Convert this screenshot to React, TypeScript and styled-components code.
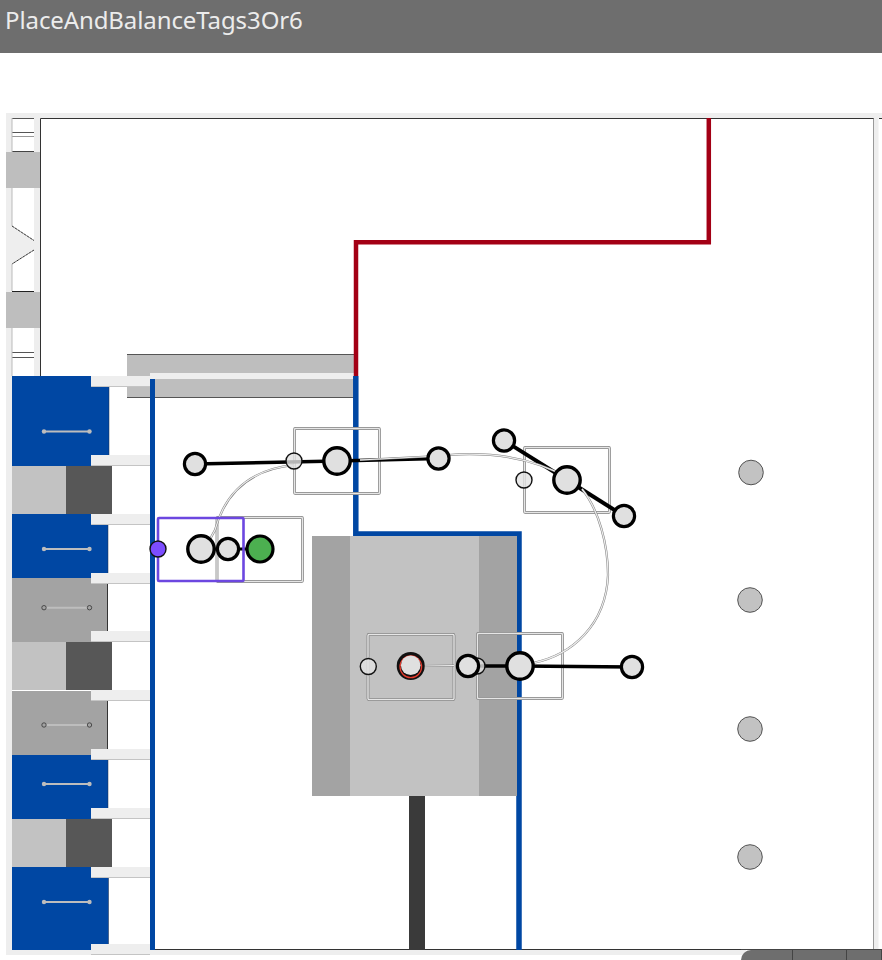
import React from "react";
import styled, { createGlobalStyle } from "styled-components";

const Global = createGlobalStyle`
  html, body { margin: 0; padding: 0; background: #fff; }
  body { font-family: "Noto Sans", "Open Sans", sans-serif; }
`;

const Page = styled.div`
  position: relative;
  width: 882px;
  height: 960px;
  overflow: hidden;
  background: #fff;
`;

const TitleBar = styled.header`
  display: flex;
  align-items: flex-start;
  height: 53px;
  padding: 4px 0 0 5px;
  box-sizing: border-box;
  background: #6e6e6e;
`;

const Title = styled.h1`
  margin: 0;
  font-family: "Noto Sans", "Open Sans", sans-serif;
  font-size: 24px;
  line-height: 32px;
  font-weight: 400;
  letter-spacing: -0.1px;
  color: #ececec;
`;

const Stage = styled.main`
  padding: 60px 0 0 6px;
`;

const Frame = styled.section`
  width: 876px;
  height: 842px;
  background: #fff;
`;

const Plan = styled.svg`
  display: block;
  width: 876px;
  height: 842px;
`;

const Tabs = styled.nav`
  position: absolute;
  right: 0;
  bottom: 0;
  display: flex;
  height: 10px;
  border-top: 1px solid #444;
`;

const Tab = styled.div<{ $w: number; $first?: boolean }>`
  width: ${(p) => p.$w}px;
  background: #6e6e6e;
  border-right: 1px solid #444;
  border-top-left-radius: ${(p) => (p.$first ? "11px" : "0")};
`;

const BLUE = "#0047a3";
const PANEL = "#eeeeee";
const MID = "#a3a3a3";
const LIGHT = "#c2c2c2";
const DARK = "#575757";
const INK = "#333333";

type Slab = { y: number; b: number; top: number; bot: number; right: number; fill: string; hy: number; solid: boolean };
const slabs: Slab[] = [
  { y: 376, b: 466, top: 387, bot: 455, right: 109, fill: BLUE, hy: 431.5, solid: true },
  { y: 514, b: 578, top: 525, bot: 573, right: 108, fill: BLUE, hy: 549, solid: true },
  { y: 578, b: 642, top: 584, bot: 631, right: 107.5, fill: MID, hy: 607.7, solid: false },
  { y: 691, b: 755, top: 701, bot: 749, right: 107.5, fill: MID, hy: 725, solid: false },
  { y: 755, b: 819, top: 760, bot: 808, right: 108, fill: BLUE, hy: 784, solid: true },
  { y: 867, b: 950, top: 878, bot: 944, right: 108.5, fill: BLUE, hy: 902, solid: true },
];
const splits = [466, 642, 819];
const ledges = [376, 455, 514, 573, 631, 690, 749, 808, 867, 944];

const boxes = [
  { x: 294.5, y: 428.5, w: 85, h: 65 },
  { x: 524.5, y: 447.5, w: 85, h: 65 },
  { x: 368, y: 634.5, w: 86, h: 65 },
  { x: 477.5, y: 633.5, w: 85, h: 65 },
  { x: 217, y: 517.5, w: 85.5, h: 64 },
];

const wires = [
  "M294 465C255 469 226 489 215 530L209 541",
  "M448 455C490 452 532 457 568 478",
  "M582 489C599 510 608 545 608 575C606 625 572 655 533 663",
  "M360 460L438 456",
  "M424 666L454 665.5",
];

const links: [number, number, number, number, number][] = [
  [195, 464, 337, 461, 3.4],
  [337, 461, 438, 458.5, 3.4],
  [504, 440.5, 567, 480, 4],
  [567, 480, 624, 516, 4],
  [477, 666, 520, 666, 3.4],
  [520, 666, 632, 667, 3.4],
  [201, 549, 260, 549, 3],
];

const thinNodes = [
  [294, 461],
  [524, 480],
  [368.3, 666.5],
  [477, 666],
];
const mediumNodes = [
  [195, 464],
  [438.5, 458.5],
  [504, 440.5],
  [624, 516],
  [468, 666],
  [632, 667],
  [228, 549],
];
const largeNodes = [
  [337, 461],
  [567, 480],
  [520, 666],
  [201, 549],
];
const posts = [
  [751, 472.5],
  [750, 600],
  [750, 729],
  [750, 857],
];

export default function App() {
  return (
    <Page>
      <Global />
      <TitleBar>
        <Title>PlaceAndBalanceTags3Or6</Title>
      </TitleBar>
      <Stage>
        <Frame>
          <Plan viewBox="6 113 876 842" aria-label="Plan">
            {/* frame */}
            <rect x={6} y={113} width={876} height={5} fill={PANEL} />
            <rect x={6} y={113} width={6} height={842} fill={PANEL} />
            <rect x={34} y={113} width={6} height={263} fill={PANEL} />
            <rect x={6} y={949} width={740} height={6} fill={PANEL} />
            <rect x={874} y={118} width={4.5} height={831} fill={PANEL} />
            <path d="M40.5 118.5H873.5V949.5H150M40.5 118.5V376M879 118.5H882" fill="none" stroke={INK} strokeWidth={1} />
            <path d="M873.5 119V949" stroke="#999" strokeWidth={1} />

            {/* upper left column */}
            <path d="M12 118.5H34M12 132.5H34M12 352.5H34M12 357.5H34" stroke="#555" strokeWidth={1} />
            <path d="M12 136.5H34" stroke="#999" strokeWidth={1} />
            <path d="M12 151.5H34" stroke="#444" strokeWidth={1} />
            <path d="M12 118V152M12 328V376" stroke="#bbb" strokeWidth={1} />
            <rect x={6} y={152} width={34} height={36} fill="#bebebe" />
            <rect x={6} y={292} width={34} height={36} fill="#bebebe" />
            <path d="M12 291.5H34" stroke="#222" strokeWidth={1} />
            <path d="M12 188V226M12 264V291" stroke="#bbb" strokeWidth={1} />
            <path d="M12 226L34 240.5V250L12 264Z" fill={PANEL} />
            <path d="M34 240.5L40 245L34 250Z" fill={PANEL} />
            <path d="M12 226L34 240.5M34 250L12 264" stroke="#333" strokeWidth={1} strokeDasharray="3 0.6" />

            {/* beam */}
            <rect x={127} y={354} width={227} height={44} fill="#bebebe" />
            <path d="M127 354.5H354M127 397.5H354" stroke="#555" strokeWidth={1} />
            <rect x={150} y={373} width={204} height={6} fill={PANEL} />

            {/* pipes */}
            <path d="M356 376V242.3H708.8V118" fill="none" stroke="#a30015" strokeWidth={4.5} />
            <rect x={150} y={379} width={5} height={571} fill={BLUE} />
            <path d="M355.8 376V534H519V950" fill="none" stroke={BLUE} strokeWidth={5.5} />

            {/* core */}
            <rect x={312} y={536} width={205} height={260} fill={MID} />
            <rect x={350} y={536} width={129} height={260} fill={LIGHT} />
            <rect x={409} y={796} width={16} height={154} fill="#3a3a3a" />

            {/* slabs */}
            {slabs.map((s) => (
              <g key={s.y}>
                <path
                  d={`M12 ${s.y}H91V${s.top}H${s.right}V${s.bot}H91V${s.b}H12Z`}
                  fill={s.fill}
                />
                <path
                  d={`M${s.right} ${s.top}V${s.bot}`}
                  stroke={s.solid ? "#1d2c4a" : "#333"}
                  strokeWidth={s.solid ? 0.5 : 1}
                />
                <path d={`M44 ${s.hy}H89.5`} stroke="#bdbdbd" strokeWidth={2} />
                <circle
                  cx={44}
                  cy={s.hy}
                  r={2.2}
                  fill={s.solid ? "#bdbdbd" : MID}
                  stroke={s.solid ? "none" : "#333"}
                  strokeWidth={0.8}
                />
                <circle
                  cx={89.5}
                  cy={s.hy}
                  r={2.2}
                  fill={s.solid ? "#bdbdbd" : MID}
                  stroke={s.solid ? "none" : "#333"}
                  strokeWidth={0.8}
                />
              </g>
            ))}
            {ledges.map((y) => (
              <g key={y}>
                <rect x={91} y={y} width={59} height={11} fill={PANEL} />
                <path d={`M91 ${y + 10.5}H150`} stroke="#c4c4c4" strokeWidth={1} />
              </g>
            ))}
            {splits.map((y) => (
              <g key={y}>
                <rect x={12} y={y} width={54} height={48} fill={LIGHT} />
                <rect x={66} y={y} width={46} height={48} fill={DARK} />
              </g>
            ))}

            {/* boxes */}
            {boxes.map((b) => (
              <g key={b.x} fill="none">
                <rect x={b.x} y={b.y} width={b.w} height={b.h} rx={1} stroke="#808080" strokeWidth={2.8} />
                <rect x={b.x} y={b.y} width={b.w} height={b.h} rx={1} stroke="#e6e6e6" strokeWidth={1.4} />
              </g>
            ))}

            {/* links */}
            {links.map(([a, b, c, d, w]) => (
              <line key={`${a}-${b}-${c}`} x1={a} y1={b} x2={c} y2={d} stroke="#000" strokeWidth={w} />
            ))}

            {/* curved wires */}
            {wires.map((d) => (
              <g key={d} fill="none">
                <path d={d} stroke="#808080" strokeWidth={2.2} />
                <path d={d} stroke="#eeeeee" strokeWidth={1.2} />
              </g>
            ))}

            {/* selection */}
            <rect x={158} y={518} width={85.5} height={63} rx={1} fill="none" stroke="#6c47e0" strokeWidth={2.6} />

            {/* nodes */}
            {thinNodes.map(([x, y]) => (
              <circle key={`${x}-${y}`} cx={x} cy={y} r={8} fill="#e2e2e2" fillOpacity={0.8} stroke="#111" strokeWidth={1.4} />
            ))}
            {mediumNodes.map(([x, y]) => (
              <circle key={`${x}-${y}`} cx={x} cy={y} r={10.6} fill="#e0e0e0" stroke="#000" strokeWidth={3.2} />
            ))}
            {largeNodes.map(([x, y]) => (
              <circle key={`${x}-${y}`} cx={x} cy={y} r={13.2} fill="#e0e0e0" stroke="#000" strokeWidth={3.4} />
            ))}
            <circle cx={158} cy={549} r={8} fill="#7c4dff" stroke="#111" strokeWidth={1.4} />
            <circle cx={260} cy={549} r={13} fill="#4caf50" stroke="#000" strokeWidth={3.2} />
            <circle cx={410.7} cy={666} r={14} fill="#111" />
            <circle cx={410.8} cy={666.8} r={10.8} fill="none" stroke="#e53a2c" strokeWidth={1.3} />
            <circle cx={410.7} cy={665.2} r={9.8} fill="#e0e0e0" />

            {/* columns */}
            {posts.map(([x, y]) => (
              <circle key={y} cx={x} cy={y} r={12.3} fill="#c2c2c2" stroke="#444" strokeWidth={0.9} />
            ))}
          </Plan>
        </Frame>
      </Stage>
      <Tabs>
        <Tab $first $w={51} />
        <Tab $w={53} />
        <Tab $w={34} />
      </Tabs>
    </Page>
  );
}
